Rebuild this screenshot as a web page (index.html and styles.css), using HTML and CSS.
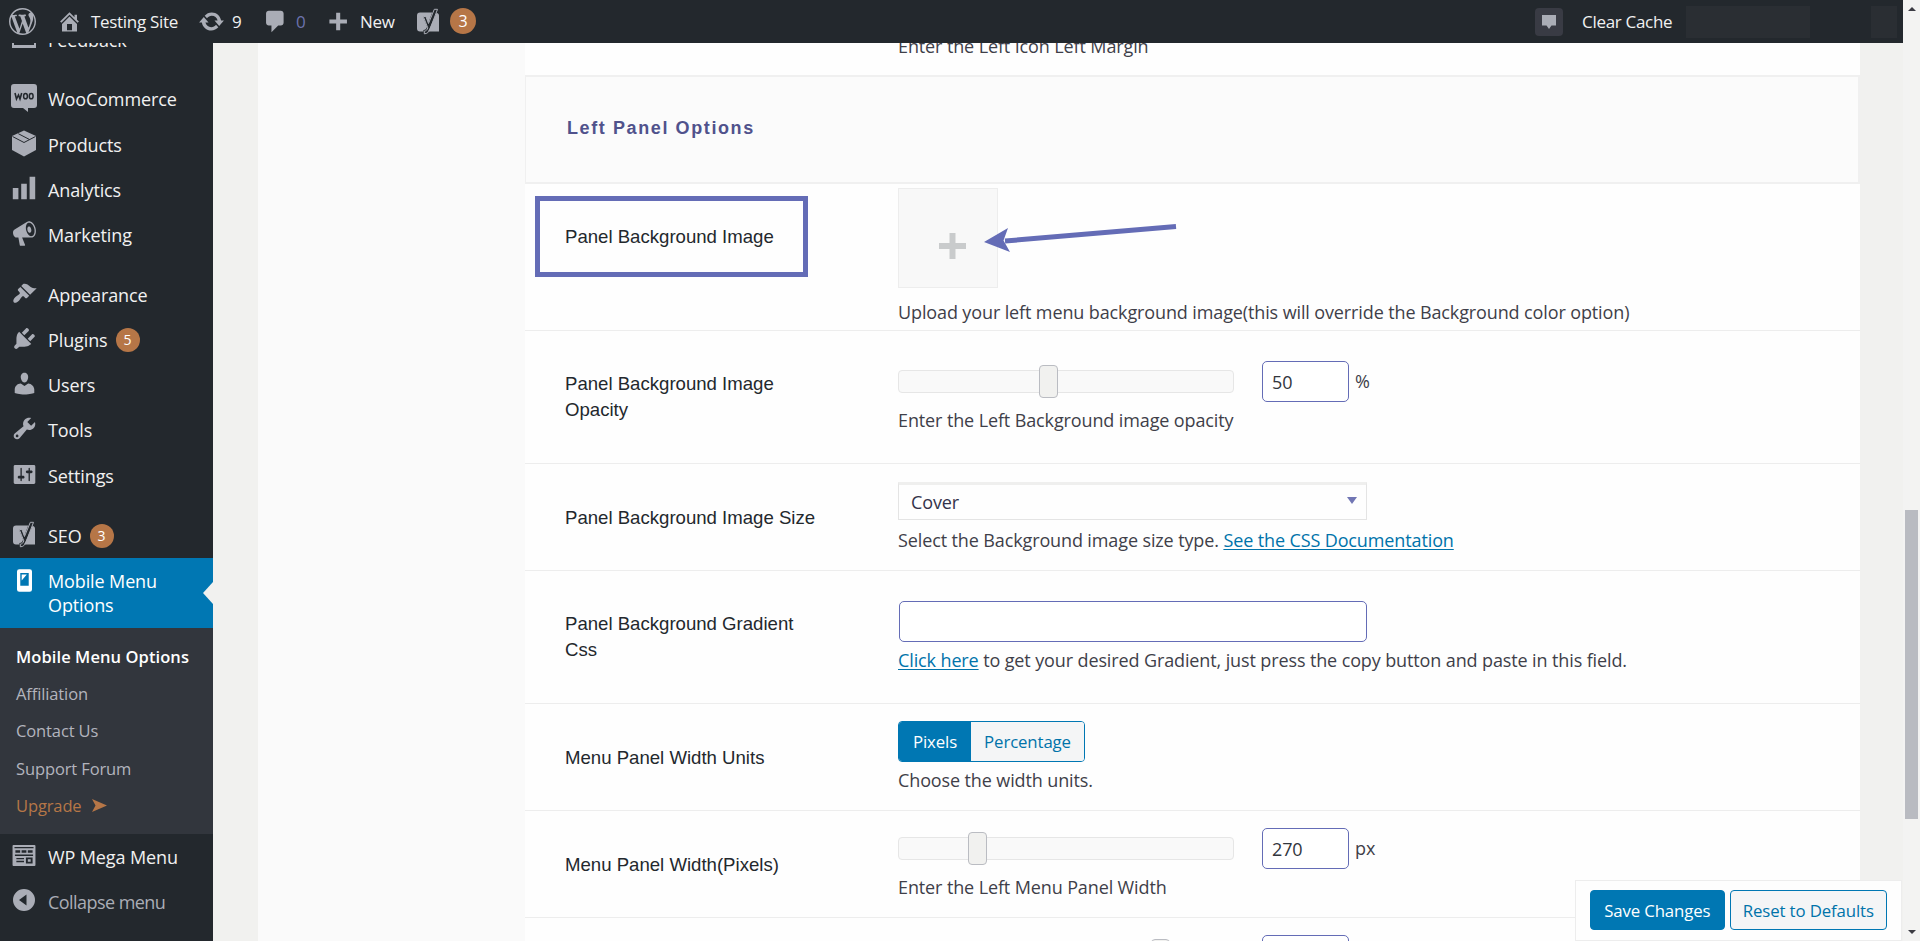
FILE: index.html
```
<!DOCTYPE html>
<html lang="en">
<head>
<meta charset="utf-8">
<title>Mobile Menu Options</title>
<link rel="stylesheet" href="styles.css">
</head>
<body>
<svg class="defs" width="0" height="0">
  <symbol id="wp" viewBox="0 0 20 20"><path d="M20 10c0-5.51-4.49-10-10-10C4.48 0 0 4.49 0 10c0 5.52 4.48 10 10 10 5.51 0 10-4.48 10-10zM7.78 15.37L4.37 6.22c.55-.02 1.17-.08 1.17-.08.5-.06.44-1.13-.06-1.11 0 0-1.45.11-2.37.11-.18 0-.37 0-.58-.01C4.12 2.69 6.87 1.11 10 1.11c2.33 0 4.45.87 6.05 2.34-.68-.11-1.65.39-1.65 1.58 0 .74.45 1.36.9 2.1.35.61.55 1.36.55 2.46 0 1.49-1.4 5-1.4 5l-3.03-8.37c.54-.02.82-.17.82-.17.5-.05.44-1.25-.06-1.22 0 0-1.44.12-2.38.12-.87 0-2.33-.12-2.33-.12-.5-.03-.56 1.2-.06 1.22l.92.08 1.26 3.41zM17.41 10c.24-.64.74-1.87.43-4.25.7 1.29 1.05 2.71 1.05 4.25 0 3.29-1.73 6.24-4.4 7.78.97-2.59 1.94-5.2 2.92-7.78zM6.1 18.09C3.12 16.65 1.11 13.53 1.11 10c0-1.3.23-2.48.72-3.59C3.25 10.3 4.67 14.2 6.1 18.09zm4.03-6.63l2.58 6.98c-.86.29-1.76.45-2.71.45-.79 0-1.57-.11-2.29-.33.81-2.38 1.62-4.74 2.42-7.1z"/></symbol>
  <symbol id="home" viewBox="0 0 20 20"><path d="M16 8.5l1.53 1.53-1.06 1.06L10 4.6l-6.47 6.49-1.06-1.06L10 2.5l4 4v-2h2v4zm-6-2.46l6 5.99V18H4v-5.97zM12 17v-5H8v5h4z"/></symbol>
  <symbol id="update" viewBox="0 0 20 20"><path d="M10.2 3.28c3.53 0 6.43 2.61 6.92 6h2.08l-3.5 4-3.5-4h2.32c-.45-1.97-2.21-3.45-4.32-3.45-1.45 0-2.73.71-3.54 1.78L4.95 5.66C6.23 4.2 8.11 3.28 10.2 3.28zm-.4 13.44c-3.52 0-6.43-2.61-6.92-6H.8l3.5-4c1.17 1.33 2.33 2.67 3.5 4H5.48c.45 1.97 2.21 3.45 4.32 3.45 1.45 0 2.73-.71 3.54-1.78l1.71 1.95c-1.28 1.46-3.15 2.38-5.25 2.38z"/></symbol>
  <symbol id="comment" viewBox="0 0 20 20"><path d="M5 2h9c1.1 0 2 .9 2 2v7c0 1.1-.9 2-2 2h-2l-5 5v-5H5c-1.1 0-2-.9-2-2V4c0-1.1.9-2 2-2z"/></symbol>
  <symbol id="plus" viewBox="0 0 20 20"><path d="M17 7v3h-5v5H9v-5H4V7h5V2h3v5h5z"/></symbol>
  <symbol id="yoast" viewBox="0 0 24 26"><path d="M4 4h12.2l-3.9 10.6L9.9 8H7l4.1 10.200c-.8 2.200-1.700 3.100-3.700 3.300v1.500H4a3 3 0 0 1-3-3V7a3 3 0 0 1 3-3zM20.600 4.200c1.400.4 2.400 1.500 2.400 2.800v16H11.600c1.100-1 1.700-2.200 2.300-3.700z"/><path d="M18.300.8h3.200L14 20.700c-1.200 3.100-2.800 4.500-5.700 4.600v-2.600c2-.3 2.800-1.400 3.500-3.300L7.300 8h2.600l2.600 7z" fill="none" stroke="currentColor" stroke-width="1"/></symbol>
  <symbol id="woo" viewBox="0 0 26 28"><path d="M3 0h20a3 3 0 0 1 3 3v18a3 3 0 0 1-3 3h-6v4l-5-4H3a3 3 0 0 1-3-3V3a3 3 0 0 1 3-3z"/><path d="M4 9l1.500 6 2-4 1.500 4 1.700-6" fill="none" stroke="#23282d" stroke-width="1.600"/><ellipse cx="14.500" cy="12.200" rx="1.900" ry="2.600" fill="none" stroke="#23282d" stroke-width="1.500"/><ellipse cx="20.200" cy="12.200" rx="1.900" ry="2.600" fill="none" stroke="#23282d" stroke-width="1.500"/></symbol>
  <symbol id="box" viewBox="0 0 24 26"><path d="M12 0l12 5.500v14L12 26 0 19.500v-14z"/><path d="M.5 6L12 12 23.500 6M6.300 3.200L17.500 9" fill="none" stroke="#23282d" stroke-width="1"/></symbol>
  <symbol id="bars" viewBox="0 0 20 20"><path d="M18 18V2h-4v16h4zm-6 0V7H8v11h4zm-6 0v-8H2v8h4z"/></symbol>
  <symbol id="horn" viewBox="0 0 20 20"><path d="M18.150 5.940c.46 1.620.38 3.220-.02 4.480-.42 1.280-1.260 2.180-2.300 2.480-.16.060-.26.060-.4.060-.06.020-.12.020-.18.020-.06.020-.14.020-.22.020h-6.800l2.220 5.500c.02.140-.06.260-.14.340-.08.100-.24.160-.34.160H6.950c-.1 0-.26-.06-.34-.16-.08-.08-.16-.2-.14-.34l-1-5.500H4.250l-.02-.02c-.5.060-1.080-.18-1.540-.62s-.88-1.080-1.060-1.880c-.24-.8-.2-1.560-.02-2.200.18-.62.58-1.080 1.060-1.300l.02-.02 9-5.400c.1-.06.180-.1.240-.16.060-.04.140-.08.240-.12.160-.08.280-.12.500-.18 1.040-.3 2.240.1 3.220.98s1.840 2.240 2.260 3.860zm-2.580 5.980h-.02c.4-.1.740-.34 1.040-.7.580-.7.860-1.760.860-3.040 0-.64-.1-1.300-.28-1.980-.34-1.360-1.020-2.500-1.780-3.240s-1.680-1.100-2.460-.88c-.82.220-1.400.960-1.700 2-.32 1.040-.28 2.360.06 3.720.38 1.360 1 2.500 1.800 3.240.78.740 1.620 1.100 2.480.88zm-2.540-7.080c.22-.04.420-.02.620.04.380.160.760.480 1.020 1s.42 1.200.42 1.780c0 .3-.04.560-.12.800-.18.480-.44.840-.86.940-.34.100-.8-.06-1.140-.4s-.64-.86-.78-1.500c-.18-.62-.12-1.240.02-1.720s.48-.84.820-.94z"/></symbol>
  <symbol id="brush" viewBox="0 0 20 20"><path d="M14.480 11.060L7.410 3.990l1.500-1.500c.5-.56 2.300-.47 3.510.320 1.210.800 1.430 1.280 2.910 2.100 1.180.640 2.450 1.260 4.450.850zm-.71.710L6.700 4.700 4.930 6.470c-.39.390-.39 1.020 0 1.410l1.060 1.060c.39.390.39 1.030 0 1.420-.6.600-1.430 1.110-2.210 1.690-.35.260-.7.530-1.010.840C1.430 14.230.4 16.080 1.400 17.070c.99 1 2.840-.03 4.180-1.360.31-.31.580-.66.850-1.020.57-.78 1.080-1.610 1.690-2.210.39-.39 1.020-.39 1.410 0l1.060 1.060c.39.390 1.020.39 1.410 0z"/></symbol>
  <symbol id="plug" viewBox="0 0 20 20"><path d="M13.110 4.360L9.870 7.600 8 5.730l3.240-3.240c.35-.34 1.050-.2 1.560.32.520.51.660 1.210.31 1.550zm-8 1.770l.91-1.120 9.010 9.010-1.190.84c-.71.71-2.630 1.160-3.820 1.160H6.140L4.900 17.260c-.59.59-1.540.59-2.120 0-.59-.58-.59-1.530 0-2.120l1.240-1.240v-3.880c0-1.130.4-3.190 1.090-3.890zm7.260 3.970l3.240-3.240c.34-.35 1.040-.21 1.550.31.520.51.660 1.210.31 1.550l-3.240 3.250z"/></symbol>
  <symbol id="user" viewBox="0 0 20 20"><path d="M10 9.250c-2.270 0-2.730-3.440-2.730-3.440C7 4.020 7.820 2 9.970 2c2.160 0 2.980 2.020 2.710 3.810 0 0-.41 3.440-2.680 3.440zm0 2.570L12.720 10c2.390 0 4.520 2.330 4.520 4.530v2.490s-3.650 1.130-7.240 1.130c-3.650 0-7.240-1.130-7.240-1.130v-2.490c0-2.250 1.940-4.480 4.470-4.480z"/></symbol>
  <symbol id="wrench" viewBox="0 0 20 20"><path d="M16.680 9.770c-1.340 1.340-3.300 1.670-4.950.99l-5.410 6.520c-.99.99-2.590.99-3.580 0s-.99-2.590 0-3.570l6.520-5.420c-.68-1.650-.35-3.610.99-4.950 1.280-1.280 3.120-1.620 4.720-1.060l-2.890 2.890 2.820 2.820 2.860-2.870c.53 1.580.18 3.390-1.080 4.650zM3.810 16.210c.4.390 1.040.39 1.430 0 .4-.4.4-1.040 0-1.430-.39-.4-1.030-.4-1.430 0-.39.390-.39 1.030 0 1.430z"/></symbol>
  <symbol id="sliders" viewBox="0 0 20 20"><path d="M18 16V4c0-.55-.45-1-1-1H3c-.55 0-1 .45-1 1v12c0 .55.45 1 1 1h14c.55 0 1-.45 1-1zM8 11h1c.55 0 1 .45 1 1s-.45 1-1 1H8v1.500c0 .28-.22.5-.5.500s-.5-.22-.5-.5V13H6c-.55 0-1-.45-1-1s.45-1 1-1h1V5.500c0-.28.22-.5.500-.5s.5.220.500.500V11zm5-2h-1c-.55 0-1-.45-1-1s.45-1 1-1h1V5.500c0-.28.22-.5.500-.5s.5.220.500.500V7h1c.55 0 1 .45 1 1s-.45 1-1 1h-1v5.500c0 .28-.22.5-.5.500s-.5-.22-.5-.5V9z"/></symbol>
  <symbol id="phone" viewBox="0 0 16 24"><path fill-rule="evenodd" d="M2.500 0h11A2.500 2.500 0 0 1 16 2.500v19a2.500 2.500 0 0 1-2.500 2.500h-11A2.500 2.500 0 0 1 0 21.500v-19A2.500 2.500 0 0 1 2.500 0zM3.500 4v13.500h9V4zM5 5.500h5.500L5 12z"/></symbol>
  <symbol id="grid" viewBox="0 0 24 22"><path fill-rule="evenodd" d="M1 0h22a1 1 0 0 1 1 1v20a1 1 0 0 1-1 1H1a1 1 0 0 1-1-1V1a1 1 0 0 1 1-1zM2 2v1.500h20V2zM3 5.500V8h5V5.500zm6.500 0V8h5V5.500zm6.500 0V8h5V5.500zM2.500 10v1.500h19V10zM4 13.500V15h8v-1.500zm0 3V18h8v-1.500zm10-3.500v6.500h7V13zm2 2h3v2.500h-3z"/></symbol>
  <symbol id="collapse" viewBox="0 0 22 22"><path fill-rule="evenodd" d="M11 0a11 11 0 1 1 0 22 11 11 0 0 1 0-22zm2.500 5.500L6 11l7.500 5.500z"/></symbol>
</svg>

<header class="bar">
  <a class="bar-item logo"><svg class="i27"><use href="#wp"/></svg></a>
  <a class="bar-item site"><svg class="i25"><use href="#home"/></svg><span>Testing Site</span></a>
  <a class="bar-item upd"><svg class="i27"><use href="#update"/></svg><span>9</span></a>
  <a class="bar-item com"><svg class="i27"><use href="#comment"/></svg><span>0</span></a>
  <a class="bar-item new"><svg class="i27"><use href="#plus"/></svg><span>New</span></a>
  <a class="bar-item seo"><svg class="yo"><use href="#yoast"/></svg><b class="badge big">3</b></a>
  <div class="bar-right">
    <span class="notice"><svg viewBox="0 0 14 14"><path d="M0 0h14v10.500H9.500L7 14l-2.500-3.500H0z"/></svg></span>
    <span class="clear">Clear Cache</span>
    <span class="blank wide"></span><span class="blank"></span>
  </div>
</header>

<div class="page">
  <nav class="side">
    <a class="item first"><i class="ico"><svg class="fb" viewBox="0 0 24 20"><path fill-rule="evenodd" d="M0 0h24v20H0zM2 14.500V17h20v-2.500h-3V13H5v1.500z"/></svg></i><span>Feedback</span></a>
    <a class="item gap"><i class="ico"><svg class="woo"><use href="#woo"/></svg></i><span>WooCommerce</span></a>
    <a class="item"><i class="ico"><svg class="bx"><use href="#box"/></svg></i><span>Products</span></a>
    <a class="item"><i class="ico"><svg class="i28"><use href="#bars"/></svg></i><span>Analytics</span></a>
    <a class="item"><i class="ico"><svg class="i27"><use href="#horn"/></svg></i><span>Marketing</span></a>
    <a class="item gap"><i class="ico"><svg class="i25"><use href="#brush"/></svg></i><span>Appearance</span></a>
    <a class="item"><i class="ico"><svg class="i27"><use href="#plug"/></svg></i><span>Plugins</span><b class="badge">5</b></a>
    <a class="item"><i class="ico"><svg class="i27"><use href="#user"/></svg></i><span>Users</span></a>
    <a class="item"><i class="ico"><svg class="i27"><use href="#wrench"/></svg></i><span>Tools</span></a>
    <a class="item"><i class="ico"><svg class="i27"><use href="#sliders"/></svg></i><span>Settings</span></a>
    <a class="item gap"><i class="ico"><svg class="yo"><use href="#yoast"/></svg></i><span>SEO</span><b class="badge">3</b></a>
    <a class="item current"><i class="ico"><svg class="ph"><use href="#phone"/></svg></i><span>Mobile Menu<br>Options</span></a>
    <div class="sub">
      <a class="on">Mobile Menu Options</a>
      <a>Affiliation</a>
      <a>Contact Us</a>
      <a>Support Forum</a>
      <a class="up">Upgrade <svg viewBox="0 0 15 13"><path d="M0 0l15 6.500L0 13l3.500-6.500z"/></svg></a>
    </div>
    <a class="item"><i class="ico"><svg class="gr"><use href="#grid"/></svg></i><span>WP Mega Menu</span></a>
    <a class="item dim"><i class="ico"><svg class="cl"><use href="#collapse"/></svg></i><span>Collapse menu</span></a>
  </nav>

  <main class="content">
    <div class="tabs"></div>
    <section class="panel">
      <div class="tail"><p class="desc">Enter the Left Icon Left Margin</p></div>
      <h3 class="heading">Left Panel Options</h3>

      <div class="row r1">
        <div class="label"><span class="marked">Panel Background Image</span></div>
        <div class="field">
          <div class="upload"><svg class="add" viewBox="0 0 27 26"><path d="M10.500 0h6v10H27v6H16.500v10h-6V16H0v-6h10.500z"/></svg>
            <svg class="arrow" viewBox="0 0 200 40"><path d="M22 20L193 5.500" stroke-width="5" fill="none" stroke="#646cb6"/><path d="M1 21L25 7l-4.500 12.500L27 31z" fill="#646cb6"/></svg></div>
          <p class="desc">Upload your left menu background image(this will override the Background color option)</p>
        </div>
      </div>

      <div class="row r2">
        <div class="label">Panel Background Image<br>Opacity</div>
        <div class="field">
          <div class="range"><div class="track"><i class="knob" style="left:140px"></i></div><div class="input num">50</div><span class="unit">%</span></div>
          <p class="desc">Enter the Left Background image opacity</p>
        </div>
      </div>

      <div class="row r3">
        <div class="label">Panel Background Image Size</div>
        <div class="field">
          <div class="select"><span>Cover</span><i class="caret"></i></div>
          <p class="desc">Select the Background image size type. <a>See the CSS Documentation</a></p>
        </div>
      </div>

      <div class="row r4">
        <div class="label">Panel Background Gradient<br>Css</div>
        <div class="field">
          <div class="input long"></div>
          <p class="desc"><a>Click here</a> to get your desired Gradient, just press the copy button and paste in this field.</p>
        </div>
      </div>

      <div class="row r5">
        <div class="label">Menu Panel Width Units</div>
        <div class="field">
          <div class="toggle"><span class="sel">Pixels</span><span class="alt">Percentage</span></div>
          <p class="desc">Choose the width units.</p>
        </div>
      </div>

      <div class="row r6">
        <div class="label">Menu Panel Width(Pixels)</div>
        <div class="field">
          <div class="range"><div class="track"><i class="knob" style="left:69px"></i></div><div class="input num">270</div><span class="unit">px</span></div>
          <p class="desc">Enter the Left Menu Panel Width</p>
        </div>
      </div>

      <div class="row r7">
        <div class="label"></div>
        <div class="field">
          <div class="range"><div class="track"><i class="knob" style="left:252px"></i></div><div class="input num"></div></div>
        </div>
      </div>
    </section>
  </main>
  <aside class="scroll"><i class="tri up"></i><i class="thumb"></i><i class="tri down"></i></aside>
</div>

<div class="save"><a class="btn primary">Save Changes</a><a class="btn">Reset to Defaults</a></div>
</body>
</html>
```
FILE: styles.css
```
* { box-sizing: border-box; }
body {
  margin: 0;
  width: 1920px;
  height: 941px;
  overflow: hidden;
  background: #f1f1ef;
  color: #3f3f49;
  font: 18px/24px "Open Sans", "Noto Sans", sans-serif;
  letter-spacing: -.12px;
}
p, h3 { margin: 0; }
i { font-style: normal; }
svg { display: block; flex: none; fill: currentColor; }
span, a { white-space: nowrap; }
.defs { position: absolute; }
.i25 { width: 25px; height: 25px; }
.i27 { width: 27px; height: 27px; }
.i28 { width: 28px; height: 28px; }
.yo { width: 24px; height: 27px; }

/* top bar */
.bar {
  position: relative;
  z-index: 3;
  display: flex;
  width: 1903px;
  height: 43px;
  background: #23282d;
  color: #f1f1f1;
  font-size: 17px;
  letter-spacing: -.3px;
}
.bar-item { display: flex; align-items: center; }
.bar svg { color: #aaadb6; margin-top: -1px; }
.logo { width: 57px; padding-left: 9px; }
.site { width: 141px; gap: 9px; }
.upd { width: 64px; gap: 7px; }
.com { width: 62px; gap: 7px; color: #6c73ad; }
.new { width: 92px; gap: 9px; }
.bar .new svg { margin-top: 3px; }
.seo { gap: 10px; }
.bar-right { display: flex; align-items: center; margin-left: auto; }
.notice {
  display: flex;
  justify-content: center;
  width: 28px;
  height: 28px;
  margin-right: 19px;
  padding-top: 7px;
  border-radius: 4px;
  background: #393b44;
}
.bar .notice svg { width: 14px; height: 14px; margin: 0; }
.clear { width: 104px; }
.blank { width: 26px; height: 32px; background: #2a2e33; margin-right: 6px; }
.blank.wide { width: 124px; margin-right: 61px; }

.badge {
  display: flex;
  align-items: center;
  justify-content: center;
  width: 24px;
  height: 24px;
  margin-left: 8px;
  border-radius: 50%;
  background: #b67647;
  color: #fff;
  font-size: 14px;
  font-weight: 400;
  letter-spacing: 0;
}
.badge.big { width: 26px; height: 26px; margin: -1px 0 0; font-size: 16px; }

/* frame */
.page { display: flex; height: 898px; }
.side { width: 213px; height: 898px; overflow: hidden; background: #23282d; color: #f1f1f1; }
.item { display: flex; align-items: center; height: 45.200px; }
.item.first { margin-top: -26px; }
.item.gap { margin-top: 14.700px; }
.ico { display: flex; justify-content: center; width: 48px; color: #aaadb6; margin-top: -3px; }
.woo { width: 26px; height: 28px; }
.bx { width: 24px; height: 27px; }
.fb { width: 24px; height: 20px; }
.ph { width: 15px; height: 23px; }
.gr { width: 24px; height: 21px; }
.cl { width: 22px; height: 22px; }
.item.current {
  position: relative;
  height: 70px;
  background: #0077b3;
  color: #fff;
}
.current .ico { color: #fff; margin-top: -26px; }
.current::after {
  content: "";
  position: absolute;
  right: 0;
  top: 24px;
  border: 11px solid transparent;
  border-left: 0;
  border-right: 10px solid #f1f1ef;
}
.sub { height: 206px; padding: 10px 0 0 16px; background: #32363d; color: #b2b4bd; font-size: 16.500px; }
.sub a { display: flex; align-items: center; gap: 10px; height: 37.300px; }
.sub .on { color: #fff; font-weight: 600; letter-spacing: .08px; }
.sub .up { color: #b67647; }
.sub svg { width: 15px; height: 13px; }
.dim { color: #aaadb6; letter-spacing: -.55px; }

.content { display: flex; flex: none; width: 1690px; padding-left: 45px; }
.tabs { width: 267px; background: #fafafa; }
.panel { width: 1335px; height: 898px; overflow: hidden; background: #fefefe; }
.tail { display: flex; height: 32px; padding-left: 373px; }
.tail .desc { margin-top: -9px; }
.heading {
  display: flex;
  align-items: center;
  height: 109px;
  padding: 0 0 3px 41px;
  border: 2px solid #f0f0f0;
  border-left-width: 1px;
  background: #fbfbfb;
  color: #50528c;
  font: bold 18px/24px "Liberation Sans", Arial, sans-serif;
  letter-spacing: 1.600px;
}
.row { display: flex; border-bottom: 1px solid #ededed; }
.label {
  display: flex;
  align-items: flex-start;
  width: 373px;
  padding-left: 40px;
  color: #23282d;
  font: 18.600px/26px "Liberation Sans", Arial, sans-serif;
  letter-spacing: 0;
}
.field { display: flex; flex-direction: column; }
.desc { height: 24px; white-space: nowrap; }
.desc a { color: #0073aa; text-decoration: underline; text-underline-offset: 2px; }
.r1 { height: 147px; padding-top: 4px; }
.r2 { height: 133px; padding-top: 29px; }
.r3 { height: 107px; padding-top: 18px; }
.r4 { height: 133px; padding-top: 29px; }
.r5 { height: 107px; padding-top: 17px; }
.r6 { height: 107px; padding-top: 16px; }
.r7 { height: 107px; padding-top: 16px; }
.r2 .label, .r4 .label { padding-top: 11px; }
.r3 .label { padding-top: 23px; }
.r5 .label { padding-top: 24px; }
.r6 .label { padding-top: 25px; }
.r1 .label { padding: 8px 0 0 10px; }
.marked {
  display: flex;
  align-items: center;
  width: 273px;
  height: 81px;
  padding-left: 25px;
  border: 5px solid #646cb6;
}
.upload {
  position: relative;
  width: 100px;
  height: 100px;
  margin-bottom: 12px;
  padding: 44px 0 0 40px;
  border: 1px solid #ededed;
  background: #f8f8f8;
  color: #c9cbcc;
}
.add { width: 27px; height: 26px; }
.arrow { position: absolute; left: 84px; top: 32px; width: 200px; height: 40px; }
.range { display: flex; align-items: center; height: 42px; margin-bottom: 6px; }
.track {
  position: relative;
  width: 336px;
  height: 23px;
  margin-right: 28px;
  border: 1px solid #e6e6e6;
  border-radius: 4px;
  background: #f9f9f9;
}
.knob {
  position: absolute;
  top: -6px;
  width: 19px;
  height: 33px;
  border: 1px solid #babcc2;
  border-radius: 4px;
  background: #f1f1ef;
}
.input { border: 1.500px solid #646cb6; border-radius: 5px; background: #fff; }
.num { width: 87px; height: 41px; padding: 8px 9px; color: #32363d; }
.unit { margin-left: 6px; }
.long { width: 468px; height: 41px; margin: 1px 0 6px 1px; }
.select {
  display: flex;
  align-items: center;
  justify-content: space-between;
  width: 469px;
  height: 38px;
  margin-bottom: 8px;
  padding: 0 9px 0 12px;
  border: 1px solid #e4e4e4;
  border-top: 3px solid #efefee;
  color: #32324a;
}
.caret { border: 5px solid transparent; border-top: 7px solid #7176b4; border-bottom: 0; margin-top: -4px; }
.toggle { display: flex; width: 187px; height: 41px; margin-bottom: 6px; border: 1px solid #0077b3; border-radius: 4px; overflow: hidden; font-size: 16.800px; }
.toggle span { display: flex; align-items: center; justify-content: center; }
.sel { width: 72px; background: #0077b3; color: #fff; }
.alt { flex: 1; background: #f4f5f6; color: #0073aa; }

.scroll { display: flex; flex-direction: column; align-items: center; position: relative; width: 17px; height: 941px; margin-top: -43px; background: #f3f3f2; }
.tri { border: 4px solid transparent; margin-top: 7px; }
.tri.up { border-bottom: 4px solid #3b3b43; border-top: 0; }
.tri.down { border-top: 4px solid #3b3b43; border-bottom: 0; margin-top: 111px; }
.thumb { width: 13px; height: 309px; margin-top: 499px; background: #b9bbc1; }

.save {
  position: absolute;
  left: 1575px;
  top: 880px;
  display: flex;
  gap: 5px;
  width: 327px;
  height: 61px;
  padding: 9px 14px;
  border: 1px solid #ededed;
  background: #fefefe;
  font-size: 16.800px;
}
.btn { display: flex; align-items: center; justify-content: center; width: 158px; height: 40px; padding-top: 2px; border: 1px solid #0077b3; border-radius: 4px; background: #f4f5f6; color: #0073aa; }
.btn.primary { width: 135px; background: #0077b3; color: #fff; }
```
